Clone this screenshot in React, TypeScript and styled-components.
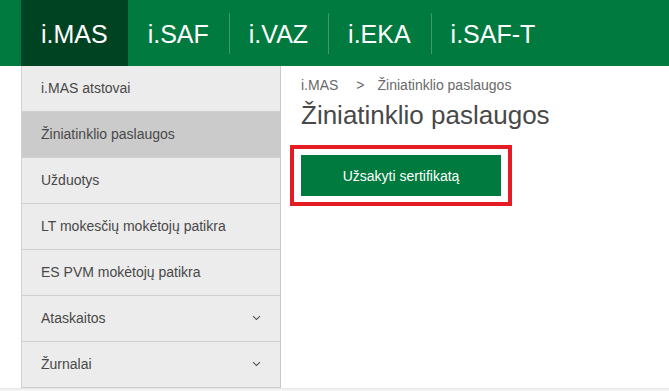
import React from "react";
import styled, { createGlobalStyle } from "styled-components";

const GlobalStyle = createGlobalStyle`
  html, body { margin: 0; padding: 0; background: #fff; }
  body { font-family: "Liberation Sans", Arial, sans-serif; }
  * { box-sizing: border-box; }
`;

const Page = styled.div`
  display: flex;
  flex-direction: column;
  width: 669px;
  height: 391px;
  overflow: hidden;
`;

const TopBar = styled.nav`
  display: flex;
  align-items: stretch;
  height: 66px;
  background: #007a3e;
  padding-left: 21px;
  flex-shrink: 0;
`;

const Tab = styled.a<{ $active?: boolean; $divider?: boolean }>`
  display: flex;
  align-items: center;
  padding: 2px 20px 0;
  font-size: 25px;
  color: #fff;
  text-decoration: none;
  background: ${(p) => (p.$active ? "#004322" : "transparent")};
  position: relative;
  ${(p) =>
    p.$divider
      ? `&::before { content: ""; position: absolute; left: 0; top: 13px; height: 41px; width: 1px; background: #3f9a6a; }`
      : ""}
`;

const Body = styled.div`
  display: flex;
  align-items: flex-start;
  flex: 0 0 auto;
`;

const Side = styled.ul`
  list-style: none;
  margin: 0 0 0 21px;
  padding: 0;
  width: 260px;
  border-left: 1px solid #d2d2d2;
  border-right: 1px solid #c8c8c8;
  background: #ececec;
`;

const SideItem = styled.li<{ $active?: boolean }>`
  display: flex;
  align-items: center;
  justify-content: space-between;
  height: 46px;
  padding: 0 19px 1px 19px;
  border-bottom: 1px solid #cfcfcf;
  background: ${(p) => (p.$active ? "#cbcbcb" : "#ececec")};
  font-size: 14px;
  color: #484848;
`;

const Main = styled.div`
  flex: 1;
  padding: 11px 0 0 20px;
`;

const Crumbs = styled.div`
  display: flex;
  font-size: 14px;
  color: #6a6a6a;
  height: 16px;
  line-height: 16px;
`;

const CrumbSep = styled.span`
  padding: 0 13px 0 18px;
`;

const Heading = styled.h1`
  margin: 7px 0 0;
  font-size: 26px;
  font-weight: normal;
  color: #484848;
  line-height: 30px;
`;

const Highlight = styled.div`
  display: inline-block;
  margin: 15px 0 0 -11px;
  border: 4px solid #e31d23;
  padding: 6px 7px 6px 7px;
`;

const Button = styled.button`
  display: block;
  width: 200px;
  height: 41px;
  border: none;
  background: #007a3e;
  color: #fff;
  font-family: "Liberation Sans", Arial, sans-serif;
  font-size: 14px;
  cursor: pointer;
`;

const Footer = styled.div`
  flex: 1;
  background: #f3f3f3;
  border-top: 1px solid #e6e6e6;
`;

const Chevron = () => (
  <svg width="9" height="6" viewBox="0 0 9 6" fill="none">
    <path d="M1 1.2 L4.5 4.5 L8 1.2" stroke="#555" strokeWidth="1.1" />
  </svg>
);

const tabs = ["i.MAS", "i.SAF", "i.VAZ", "i.EKA", "i.SAF-T"];
const menu: { label: string; active?: boolean; sub?: boolean }[] = [
  { label: "i.MAS atstovai" },
  { label: "Žiniatinklio paslaugos", active: true },
  { label: "Užduotys" },
  { label: "LT mokesčių mokėtojų patikra" },
  { label: "ES PVM mokėtojų patikra" },
  { label: "Ataskaitos", sub: true },
  { label: "Žurnalai", sub: true },
];

export default function App() {
  return (
    <Page>
      <GlobalStyle />
      <TopBar>
        {tabs.map((t, i) => (
          <Tab key={t} $active={i === 0} $divider={i > 1}>
            {t}
          </Tab>
        ))}
      </TopBar>
      <Body>
        <Side>
          {menu.map((m) => (
            <SideItem key={m.label} $active={m.active}>
              <span>{m.label}</span>
              {m.sub && <Chevron />}
            </SideItem>
          ))}
        </Side>
        <Main>
          <Crumbs>
            <span>i.MAS</span>
            <CrumbSep>&gt;</CrumbSep>
            <span>Žiniatinklio paslaugos</span>
          </Crumbs>
          <Heading>Žiniatinklio paslaugos</Heading>
          <Highlight>
            <Button>Užsakyti sertifikatą</Button>
          </Highlight>
        </Main>
      </Body>
      <Footer />
    </Page>
  );
}
